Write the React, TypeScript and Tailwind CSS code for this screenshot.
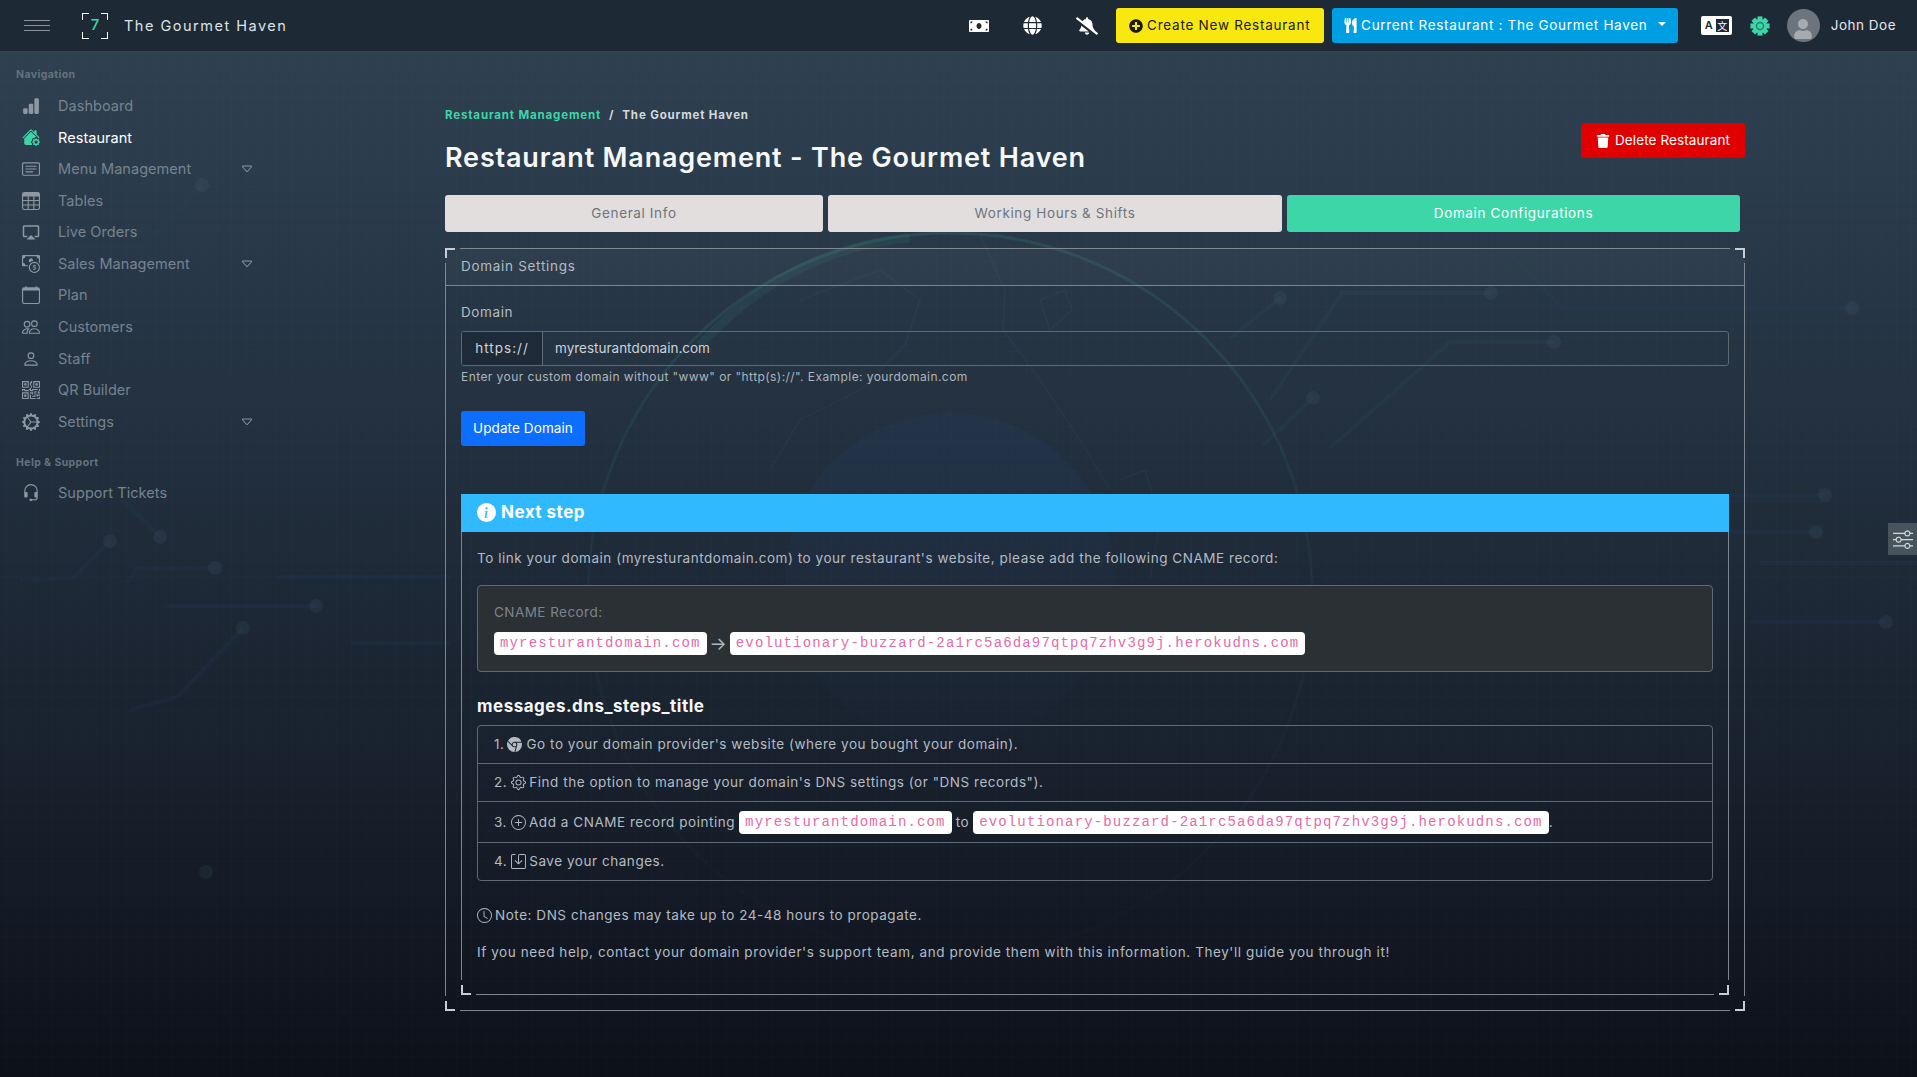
import React from "react";
import {
  BsBarChartFill, BsHouseGearFill, BsCardText, BsTable, BsCalendar, BsPeople, BsPerson, BsQrCode,
  BsGearWideConnected, BsHeadset, BsCaretDown, BsSliders, BsInfoCircleFill, BsBrowserChrome, BsGear,
  BsPlusCircle, BsSave, BsClock, BsCashCoin,
} from "react-icons/bs";
import { MdOutlineAirplay } from "react-icons/md";
import { FaMoneyBill, FaGlobe, FaBellSlash, FaPlusCircle, FaUtensils, FaTrash, FaUser } from "react-icons/fa";

const DOMAIN = "myresturantdomain.com";
const TARGET = "evolutionary-buzzard-2a1rc5a6da97qtpq7zhv3g9j.herokudns.com";

function Background() {
  const blue: [string, number, number][] = [
    ["M1512 255L1562 308L1852 308", 1852, 308],
    ["M70 245L145 245L202 185", 202, 185],
    ["M20 580L73 578L110 541", 110, 541],
    ["M123 500L160 537", 160, 537],
    ["M127 583L137 568L215 568", 215, 568],
    ["M167 606L316 606", 316, 606],
    ["M130 710L177 697L243 628", 243, 628],
    ["M1730 495L1825 495", 1825, 495],
    ["M1730 532L1816 532", 1816, 532],
    ["M1750 622L1886 622", 1886, 622],
    ["M277 577L450 577", -20, -20],
    ["M1760 563L1917 563", -20, -20],
    ["M350 643L450 643", 206, 872],
  ];
  const teal: [string, number, number][] = [
    ["M1270 400L1342 293L1491 293", 1491, 293],
    ["M1230 338L1280 298", 1280, 298],
    ["M1330 448L1450 342L1554 342", 1554, 342],
    ["M1263 445L1313 398", 1313, 398],
  ];
  return (
    <svg className="absolute inset-0 w-full h-full" viewBox="0 0 1917 1077">
      <defs>
        <pattern id="fine" width="15" height="15" patternUnits="userSpaceOnUse" x="7" y="7">
          <path d="M15 0V15M0 15H15" stroke="#fff" strokeOpacity="0.016" fill="none" />
        </pattern>
        <pattern id="big" width="75" height="75" patternUnits="userSpaceOnUse" x="-38" y="-38">
          <path d="M75.5 0V75M0 75.5H75" stroke="#fff" strokeOpacity="0.03" fill="none" />
          <path d="M75.5 71V80M71 75.5H80M75.5 -5V4M-5 75.5H4" stroke="#fff" strokeOpacity="0.08" fill="none" />
        </pattern>
        <linearGradient id="globeFade" x1="0" y1="0" x2="0" y2="1">
          <stop offset="0" stopColor="#3dd6a8" stopOpacity="0.12" />
          <stop offset="0.4" stopColor="#3dd6a8" stopOpacity="0.05" />
          <stop offset="1" stopColor="#3a6fa0" stopOpacity="0.015" />
        </linearGradient>
        <linearGradient id="blob" x1="0" y1="0" x2="0" y2="1">
          <stop offset="0" stopColor="#25406f" stopOpacity="0.2" />
          <stop offset="1" stopColor="#25406f" stopOpacity="0.02" />
        </linearGradient>
      </defs>
      <rect width="1917" height="1077" fill="url(#fine)" />
      <rect width="1917" height="1077" fill="url(#big)" />
      <circle cx="950" cy="578" r="165" fill="url(#blob)" />
      <circle cx="950" cy="595" r="362" fill="none" stroke="url(#globeFade)" strokeWidth="3" />
      <path d="M700 345C760 280 830 245 910 238" fill="none" stroke="#3dd6a8" strokeOpacity="0.07" strokeWidth="9" />
      <g fill="none" stroke="#6fb8c0" strokeOpacity="0.05" strokeWidth="1.5">
        <path d="M980 235L1005 290L1003 330L1040 380L1080 440L1110 490" />
        <path d="M800 300L880 270L920 300L905 345L860 390L800 420L770 470" />
        <path d="M1120 480L1145 470L1160 520L1150 580" />
        <path d="M1040 300L1065 290L1072 310L1050 330Z" />
      </g>
      <g fill="none" strokeWidth="4">
        {blue.map(([d], i) => <path key={i} d={d} stroke="#2a4378" strokeOpacity="0.13" />)}
        {teal.map(([d], i) => <path key={i} d={d} stroke="#3dd6a8" strokeOpacity="0.04" />)}
      </g>
      <g fill="#5c7a88" fillOpacity="0.12">
        {[...blue, ...teal].map(([, x, y], i) => <circle key={i} cx={x} cy={y} r="7" />)}
      </g>
    </svg>
  );
}

function Corner({ className }: { className: string }) {
  return <span className={`absolute w-[10px] h-[10px] border-[#c8cbd6] ${className}`} />;
}

function Frame({ children }: { children: React.ReactNode }) {
  return (
    <div className="relative">
      <span className="absolute top-0 left-[15px] right-[15px] h-px bg-[#7c8590]" />
      <span className="absolute bottom-0 left-[15px] right-[15px] h-px bg-[#7c8590]" />
      <span className="absolute left-0 top-[15px] bottom-[15px] w-px bg-[#7c8590]" />
      <span className="absolute right-0 top-[15px] bottom-[15px] w-px bg-[#7c8590]" />
      <Corner className="top-0 left-0 border-t-2 border-l-2" />
      <Corner className="top-0 right-0 border-t-2 border-r-2" />
      <Corner className="bottom-0 left-0 border-b-2 border-l-2" />
      <Corner className="bottom-0 right-0 border-b-2 border-r-2" />
      <div className="relative">{children}</div>
    </div>
  );
}

function Code({ children, className = "" }: { children: React.ReactNode; className?: string }) {
  return (
    <code className={`inline-block h-[23px] leading-[23px] px-[6px] rounded-[4px] bg-white text-[#e36ba8] text-[14px] tracking-[1.15px] font-['Liberation_Mono',monospace] ${className}`}>
      {children}
    </code>
  );
}

function NavItem({ icon, label, active, caret }: { icon: React.ReactNode; label: string; active?: boolean; caret?: boolean }) {
  return (
    <div className={`h-[31.6px] flex items-center pl-[22px] pr-[11px] text-[14.5px] tracking-[0.05px] ${active ? "text-white" : "text-[#77838f]"}`}>
      <span className={`w-[18px] h-[18px] flex items-center justify-center text-[18px] ${active ? "text-[#3dd6a8]" : "text-[#8d98a3]"}`}>{icon}</span>
      <span className="ml-[18px] flex-1">{label}</span>
      {caret && <BsCaretDown className="text-[14px] text-[#8d98a3]" />}
    </div>
  );
}

function SideLabel({ children, className = "" }: { children: React.ReactNode; className?: string }) {
  return <div className={`h-4 leading-4 pl-4 mb-[7px] text-[10.5px] font-bold tracking-[0.4px] text-[#66727e] ${className}`}>{children}</div>;
}

function Step({ children, className }: { children: React.ReactNode; className: string }) {
  return <li className={`flex items-center px-4 text-[13.5px] tracking-[0.54px] text-[#b4bbc3] ${className}`}>{children}</li>;
}

function GreenGear() {
  const teeth = [0, 45, 90, 135, 180, 225, 270, 315];
  return (
    <svg viewBox="0 0 24 24" className="w-[20px] h-[20px]">
      {teeth.map((a) => <rect key={a} x="9" y="0.5" width="6" height="6" fill="#3dd6a8" transform={`rotate(${a} 12 12)`} />)}
      <circle cx="12" cy="12" r="8.5" fill="#3dd6a8" />
      <circle cx="12" cy="12" r="5" fill="#2a7d6c" />
      <circle cx="12" cy="12" r="3.4" fill="#3dd6a8" />
    </svg>
  );
}

export default function App() {
  return (
    <div className="relative h-[1077px] w-full overflow-hidden bg-[linear-gradient(180deg,#2f4252_0%,#2b3c4d_15%,#1f2b39_50%,#151c28_80%,#0d1019_100%)] font-['Inter','Liberation_Sans',sans-serif]">
      <Background />

      <header className="relative h-[51px] bg-[#1e2936] flex items-center text-white">
        <div className="ml-[24px] w-[26px] flex flex-col gap-[4px]">
          <span className="h-px bg-[#8a939c]" /><span className="h-px bg-[#8a939c]" /><span className="h-px bg-[#8a939c]" />
        </div>
        <div className="relative ml-[32px] w-[26px] h-[26px] flex items-center justify-center text-[#3dd6a8] text-[15px] font-medium">
          <span className="absolute top-0 left-0 w-[7px] h-[7px] border-t border-l border-white" />
          <span className="absolute top-0 right-0 w-[7px] h-[7px] border-t border-r border-white" />
          <span className="absolute bottom-0 left-0 w-[7px] h-[7px] border-b border-l border-white" />
          <span className="absolute bottom-0 right-0 w-[7px] h-[7px] border-b border-r border-white" />
          7
        </div>
        <div className="ml-[16px] text-[14.5px] tracking-[1.5px] text-[#dfe3e6]">The Gourmet Haven</div>
        <div className="flex-1" />
        <FaMoneyBill className="text-[20px] mr-[34px]" />
        <FaGlobe className="text-[19px] mr-[34px]" />
        <FaBellSlash className="text-[22px] mr-[18px]" />
        <button className="w-[208px] h-[35px] rounded-[3px] bg-[#f9e80f] text-[#1a1a1a] text-[13.5px] tracking-[0.75px] flex items-center justify-center gap-[4px] mr-[8px]">
          <FaPlusCircle className="text-[14px]" />Create New Restaurant
        </button>
        <button className="w-[346px] h-[35px] rounded-[3px] bg-[#009fe3] text-white text-[13.5px] tracking-[0.68px] flex items-center justify-center gap-[3px] mr-[23px]">
          <FaUtensils className="text-[15px]" />Current Restaurant : The Gourmet Haven
          <span className="ml-[8px] mb-[3px] border-t-[4px] border-x-[4px] border-x-transparent border-t-white" />
        </button>
        <div className="w-[31px] h-[19px] rounded-[2px] bg-white flex items-center justify-between pl-[4px] pr-[3px] mr-[18px]">
          <span className="text-[11px] leading-none font-semibold text-[#1e2936]">A</span>
          <span className="w-[13px] h-[13px] bg-[#1e2936] text-white text-[10px] leading-[13px] text-center font-['Noto_Sans_CJK_SC',sans-serif]">文</span>
        </div>
        <span className="mr-[17px] flex"><GreenGear /></span>
        <span className="w-[33px] h-[33px] rounded-full bg-[#6c757d] flex items-end justify-center overflow-hidden mr-[11px]">
          <FaUser className="text-[20px] text-[#a5abb0] mb-[3px]" />
        </span>
        <span className="text-[13.5px] tracking-[0.5px] text-[#e5e7ea] mr-[21px]">John Doe</span>
      </header>

      <div className="relative flex">
        <aside className="w-[265px] shrink-0 pt-[16px]">
          <SideLabel>Navigation</SideLabel>
          <NavItem icon={<BsBarChartFill />} label="Dashboard" />
          <NavItem icon={<BsHouseGearFill />} label="Restaurant" active />
          <NavItem icon={<BsCardText />} label="Menu Management" caret />
          <NavItem icon={<BsTable />} label="Tables" />
          <NavItem icon={<MdOutlineAirplay />} label="Live Orders" />
          <NavItem icon={<BsCashCoin />} label="Sales Management" caret />
          <NavItem icon={<BsCalendar />} label="Plan" />
          <NavItem icon={<BsPeople />} label="Customers" />
          <NavItem icon={<BsPerson />} label="Staff" />
          <NavItem icon={<BsQrCode />} label="QR Builder" />
          <NavItem icon={<BsGearWideConnected />} label="Settings" caret />
          <SideLabel className="mt-[17px]">Help &amp; Support</SideLabel>
          <NavItem icon={<BsHeadset />} label="Support Tickets" />
        </aside>

        <main className="ml-[180px] w-[1300px] pt-[56px]">
          <div className="flex items-start justify-between">
            <div>
              <div className="h-4 leading-4 text-[11.5px] font-bold tracking-[0.85px] flex gap-[8px]">
                <span className="text-[#3dd6a8]">Restaurant Management</span>
                <span className="text-[#d5d9dd]">/</span>
                <span className="text-[#d5d9dd]">The Gourmet Haven</span>
              </div>
              <h1 className="mt-[18px] h-[34px] leading-[34px] text-[27px] font-semibold tracking-[0.82px] text-[#f5f7f8]">Restaurant Management - The Gourmet Haven</h1>
            </div>
            <button className="mt-[16px] w-[164px] h-[35px] rounded-[3px] bg-[#e00000] text-white text-[13.5px] tracking-[0.1px] flex items-center justify-center gap-[5px]">
              <FaTrash className="text-[14px]" />Delete Restaurant
            </button>
          </div>

          <div className="mt-[20px] grid grid-cols-[378px_454px_453px] gap-[5px] text-[13.5px] tracking-[0.62px]">
            <div className="h-[37px] rounded-[3px] bg-[#e2dede] text-[#6c757d] flex items-center justify-center">General Info</div>
            <div className="h-[37px] rounded-[3px] bg-[#e2dede] text-[#6c757d] flex items-center justify-center">Working Hours &amp; Shifts</div>
            <div className="h-[37px] rounded-[3px] bg-[#3dd6a8] text-white flex items-center justify-center">Domain Configurations</div>
          </div>

          <div className="mt-[16px]">
            <Frame>
              <div className="h-[38px] flex items-center px-4 border-b border-[#7c8590] bg-white/[0.03] text-[13.5px] tracking-[0.7px] text-[#b4bbc3]">Domain Settings</div>
              <div className="px-4 pt-[17px] pb-4">
                <div className="h-[18px] leading-[18px] text-[13.5px] tracking-[0.6px] text-[#b4bbc3]">Domain</div>
                <div className="mt-[10px] h-[35px] flex border border-[#5f6a75] rounded-[3px] text-[13.5px]">
                  <div className="w-[81px] flex items-center justify-center border-r border-[#5f6a75] bg-[#1b2531]/60 text-[#d0d4d8] tracking-[1px]">https://</div>
                  <div className="flex-1 flex items-center pl-3 text-[#ccd1d6] tracking-[0px]">{DOMAIN}</div>
                </div>
                <div className="mt-[3px] h-4 leading-4 text-[12px] tracking-[0.43px] text-[#aeb5bc]">Enter your custom domain without "www" or "http(s)://". Example: yourdomain.com</div>
                <button className="mt-[26px] block w-[124px] h-[35px] rounded-[3px] bg-[#0d6efd] text-white text-[13.5px] tracking-[0.1px]">Update Domain</button>

                <div className="mt-[48px]">
                  <Frame>
                    <div className="h-[38px] bg-[#31b9ff] text-white flex items-center gap-[5px] px-4 text-[17px] font-bold tracking-[0.5px] pb-[1px]">
                      <BsInfoCircleFill className="text-[19px]" />Next step
                    </div>
                    <div className="px-4 pt-[17px] pb-[34px]">
                      <p className="h-[18px] leading-[18px] text-[13.5px] tracking-[0.54px] text-[#b4bbc3]">To link your domain ({DOMAIN}) to your restaurant's website, please add the following CNAME record:</p>
                      <div className="mt-[18px] h-[87px] rounded-[4px] border border-[#5f6a75] bg-[#2b3035] pt-[17px] pl-4">
                        <div className="h-[18px] leading-[18px] text-[13.5px] tracking-[0.45px] text-[#7b848d]">CNAME Record:</div>
                        <div className="mt-[11px] flex items-center gap-[3px] text-[#aeb5bc]">
                          <Code>{DOMAIN}</Code><span className="text-[18px] leading-none">→</span><Code>{TARGET}</Code>
                        </div>
                      </div>
                      <h3 className="mt-[23px] h-[22px] leading-[22px] text-[17px] font-bold tracking-[0.5px] text-[#f5f7f8]">messages.dns_steps_title</h3>
                      <ol className="mt-[8px] rounded-[4px] border border-[#5f6a75] divide-y divide-[#5f6a75]">
                        <Step className="h-[38px]">1.<BsBrowserChrome className="text-[15px] ml-[3px] mr-[4px]" />Go to your domain provider's website (where you bought your domain).</Step>
                        <Step className="h-[38px]">2.<BsGear className="text-[15px] ml-[4px] mr-[3px]" />Find the option to manage your domain's DNS settings (or "DNS records").</Step>
                        <Step className="h-[41px] tracking-[0.48px]">3.<BsPlusCircle className="text-[15px] ml-[4px] mr-[3px]" />Add a CNAME record pointing<Code className="mx-[4px]">{DOMAIN}</Code>to<Code className="ml-[4px]">{TARGET}</Code>.</Step>
                        <Step className="h-[37px]">4.<BsSave className="text-[15px] ml-[4px] mr-[3px]" />Save your changes.</Step>
                      </ol>
                      <p className="mt-[25px] h-[18px] flex items-center gap-[3px] text-[13.5px] tracking-[0.54px] text-[#b4bbc3]"><BsClock className="text-[15px]" />Note: DNS changes may take up to 24-48 hours to propagate.</p>
                      <p className="mt-[19px] h-[18px] leading-[18px] text-[13.5px] tracking-[0.58px] text-[#b4bbc3]">If you need help, contact your domain provider's support team, and provide them with this information. They'll guide you through it!</p>
                    </div>
                  </Frame>
                </div>
              </div>
            </Frame>
          </div>
        </main>
      </div>

      <div className="absolute right-0 top-[523px] w-[29px] h-[32px] bg-[#47545c] flex items-center justify-center text-[#d5d9dd]">
        <BsSliders className="text-[20px]" />
      </div>
    </div>
  );
}
